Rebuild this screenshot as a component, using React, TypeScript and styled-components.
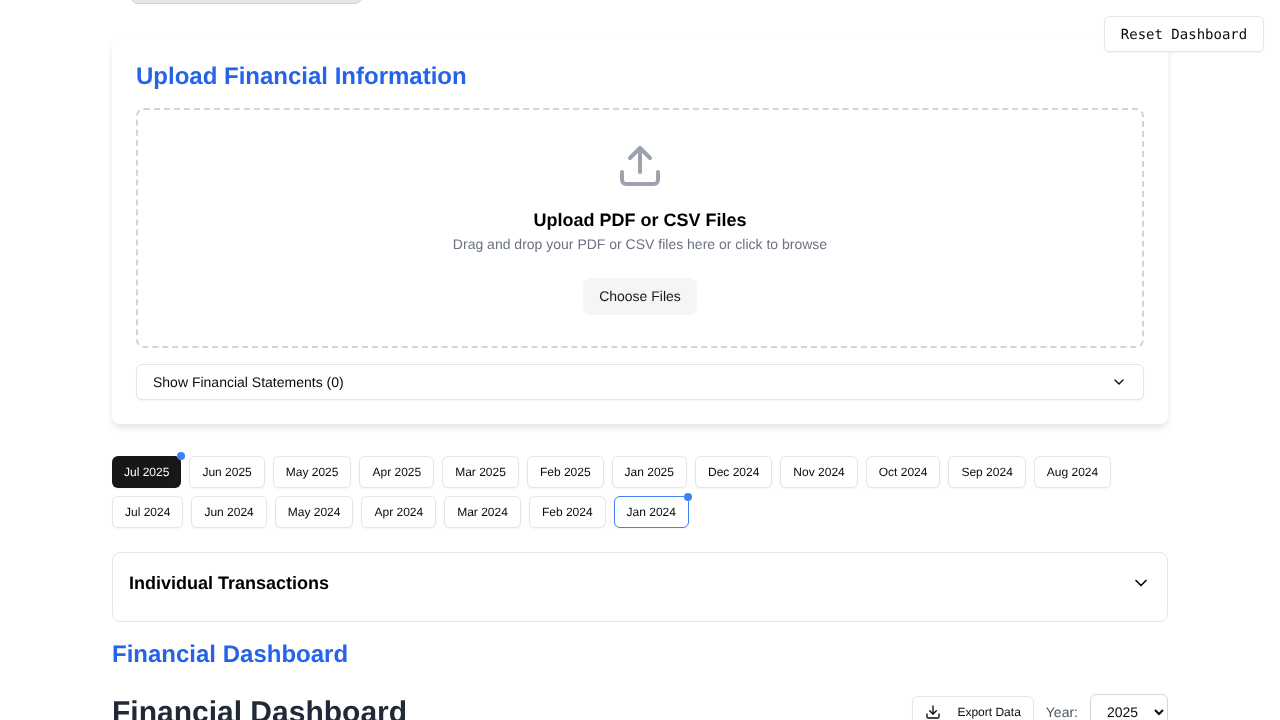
import React from "react";
import styled, { createGlobalStyle } from "styled-components";

const Global = createGlobalStyle`
  html, body { margin: 0; padding: 0; background: #fff; height: 720px; overflow: hidden; }
  body { font-family: "Liberation Sans", Arial, sans-serif; color: #0a0a0a; text-rendering: geometricPrecision; -webkit-font-smoothing: antialiased; }
  button, select { text-rendering: geometricPrecision; }
  * { box-sizing: border-box; }
`;

const Page = styled.main`
  width: 1056px;
  height: 720px;
  margin: 0 auto;
  display: flex;
  flex-direction: column;
  will-change: transform;
`;

const TopStub = styled.div`
  width: 233px;
  height: 24px;
  margin: -20px 0 0 18px;
  background: #e5e7eb;
  border: 1px solid #d1d5db;
  border-radius: 8px;
  flex: none;
`;

const ResetButton = styled.button`
  position: fixed;
  top: 16px;
  right: 16px;
  z-index: 10;
  width: 160px;
  height: 36px;
  background: #fff;
  border: 1px solid #e5e5e5;
  border-radius: 6px;
  box-shadow: 0 1px 2px rgba(0, 0, 0, 0.05);
  font-family: "DejaVu Sans Mono", monospace;
  font-size: 14px;
  color: #0a0a0a;
  padding: 2px 0 0;
  will-change: transform;
`;

const UploadCard = styled.section`
  margin-top: 36px;
  height: 384px;
  flex: none;
  padding: 24px;
  background: #fff;
  border-radius: 8px;
  box-shadow: 0 4px 6px rgba(0, 0, 0, 0.1);
`;

const CardTitle = styled.h2`
  margin: 0 0 16px;
  font-size: 24px;
  line-height: 26px;
  height: 28px;
  font-weight: 700;
  color: #2563eb;
`;

const DropZone = styled.div`
  height: 240px;
  border: 2px dashed #d1d5db;
  border-radius: 8px;
  display: flex;
  flex-direction: column;
  align-items: center;
  padding-top: 32px;
`;

const UploadIcon = styled.svg`
  width: 48px;
  height: 48px;
  color: #9ca3af;
  display: block;
`;

const DropTitle = styled.h3`
  margin: 16px 0 0;
  font-size: 18px;
  line-height: 28px;
  font-weight: 700;
  color: #000;
`;

const DropHint = styled.p`
  margin: 0;
  font-size: 14px;
  line-height: 20px;
  color: #6b7280;
`;

const ChooseButton = styled.button`
  margin-top: 24px;
  width: 114px;
  height: 37px;
  border: 0;
  border-radius: 8px;
  background: #f5f5f5;
  font-family: inherit;
  font-size: 14px;
  color: #171717;
  padding: 0 0 2px;
`;

const StatementsToggle = styled.button`
  width: 100%;
  height: 36px;
  margin-top: 16px;
  padding: 0 16px;
  display: flex;
  align-items: center;
  justify-content: space-between;
  background: #fff;
  border: 1px solid #e5e5e5;
  border-radius: 6px;
  box-shadow: 0 1px 2px rgba(0, 0, 0, 0.05);
  font-family: inherit;
  font-size: 14px;
  color: #0a0a0a;
`;

const MonthGrid = styled.div`
  margin-top: 32px;
  display: flex;
  flex-direction: column;
  gap: 8px;
  flex: none;
`;

const MonthRow = styled.div`
  display: flex;
  gap: 8px;
`;

const MonthChip = styled.button<{ $active?: boolean; $selected?: boolean }>`
  position: relative;
  height: 32px;
  padding: 0 12px;
  border-radius: 6px;
  font-family: inherit;
  font-size: 12px;
  white-space: nowrap;
  box-shadow: 0 1px 2px rgba(0, 0, 0, 0.05);
  background: ${(p) => (p.$active ? "#171717" : "#fff")};
  color: ${(p) => (p.$active ? "#fafafa" : "#0a0a0a")};
  border: ${(p) => (p.$active ? "0" : `1px solid ${p.$selected ? "#3b82f6" : "#e5e5e5"}`)};
`;

const Dot = styled.span`
  position: absolute;
  top: -4px;
  right: -4px;
  width: 8px;
  height: 8px;
  border-radius: 50%;
  background: #3b82f6;
`;

const TransactionsCard = styled.section`
  margin-top: 24px;
  height: 70px;
  flex: none;
  padding: 0 16px;
  border: 1px solid #e5e5e5;
  border-radius: 8px;
  background: #fff;
  display: flex;
  align-items: flex-start;
  justify-content: space-between;
`;

const TransactionsTitle = styled.h3`
  margin: 16px 0 0;
  font-size: 18px;
  line-height: 28px;
  font-weight: 700;
  color: #000;
`;

const TransactionsChevron = styled.svg`
  width: 20px;
  height: 20px;
  margin-top: 20px;
  color: #0a0a0a;
`;

const SectionTitle = styled.h2`
  margin: 16px 0 0;
  font-size: 24px;
  line-height: 34px;
  font-weight: 700;
  color: #2563eb;
  flex: none;
`;

const DashboardHeader = styled.div`
  margin-top: 22px;
  display: flex;
  align-items: flex-start;
  justify-content: space-between;
  flex: none;
`;

const DashboardTitle = styled.h1`
  margin: 0;
  font-size: 30px;
  line-height: 38px;
  font-weight: 700;
  color: #1f2937;
`;

const Controls = styled.div`
  display: flex;
  align-items: center;
  gap: 12px;
`;

const ExportButton = styled.button`
  width: 122px;
  height: 32px;
  padding: 0 12px;
  display: flex;
  align-items: center;
  justify-content: space-between;
  background: #fff;
  border: 1px solid #e5e5e5;
  border-radius: 6px;
  box-shadow: 0 1px 2px rgba(0, 0, 0, 0.05);
  font-family: inherit;
  font-size: 12px;
  color: #0a0a0a;
`;

const YearLabel = styled.span`
  font-size: 14px;
  color: #4b5563;
`;

const YearSelect = styled.select`
  width: 78px;
  height: 36px;
  padding: 0 8px 0 12px;
  background: #fff;
  border: 1px solid #d1d5db;
  border-radius: 6px;
  font-family: inherit;
  font-size: 14px;
  color: #0a0a0a;
`;

const row1 = ["Jul 2025","Jun 2025","May 2025","Apr 2025","Mar 2025","Feb 2025","Jan 2025","Dec 2024","Nov 2024","Oct 2024","Sep 2024","Aug 2024"];
const row2 = ["Jul 2024","Jun 2024","May 2024","Apr 2024","Mar 2024","Feb 2024","Jan 2024"];

const Chevron = () => (
  <svg width="16" height="16" viewBox="0 0 24 24" fill="none" stroke="currentColor" strokeWidth="2" strokeLinecap="round" strokeLinejoin="round">
    <path d="m6 9 6 6 6-6" />
  </svg>
);

export default function App() {
  return (
    <>
      <Global />
      <ResetButton>Reset Dashboard</ResetButton>
      <Page>
        <TopStub />
        <UploadCard>
          <CardTitle>Upload Financial Information</CardTitle>
          <DropZone>
            <UploadIcon viewBox="0 0 24 24" fill="none" stroke="currentColor" strokeWidth="2" strokeLinecap="round" strokeLinejoin="round">
              <path d="M12 3v12" />
              <path d="m17 8-5-5-5 5" />
              <path d="M21 15v4a2 2 0 0 1-2 2H5a2 2 0 0 1-2-2v-4" />
            </UploadIcon>
            <DropTitle>Upload PDF or CSV Files</DropTitle>
            <DropHint>Drag and drop your PDF or CSV files here or click to browse</DropHint>
            <ChooseButton>Choose Files</ChooseButton>
          </DropZone>
          <StatementsToggle>
            <span>Show Financial Statements (0)</span>
            <Chevron />
          </StatementsToggle>
        </UploadCard>
        <MonthGrid>
          <MonthRow>
            {row1.map((m, i) => (
              <MonthChip key={m} $active={i === 0}>
                {m}
                {i === 0 && <Dot />}
              </MonthChip>
            ))}
          </MonthRow>
          <MonthRow>
            {row2.map((m) => (
              <MonthChip key={m} $selected={m === "Jan 2024"}>
                {m}
                {m === "Jan 2024" && <Dot />}
              </MonthChip>
            ))}
          </MonthRow>
        </MonthGrid>
        <TransactionsCard>
          <TransactionsTitle>Individual Transactions</TransactionsTitle>
          <TransactionsChevron viewBox="0 0 24 24" fill="none" stroke="currentColor" strokeWidth="2" strokeLinecap="round" strokeLinejoin="round">
            <path d="m6 9 6 6 6-6" />
          </TransactionsChevron>
        </TransactionsCard>
        <SectionTitle>Financial Dashboard</SectionTitle>
        <DashboardHeader>
          <DashboardTitle>Financial Dashboard</DashboardTitle>
          <Controls>
            <ExportButton>
              <svg width="16" height="16" viewBox="0 0 24 24" fill="none" stroke="currentColor" strokeWidth="2" strokeLinecap="round" strokeLinejoin="round">
                <path d="M12 15V3" />
                <path d="m7 10 5 5 5-5" />
                <path d="M21 15v4a2 2 0 0 1-2 2H5a2 2 0 0 1-2-2v-4" />
              </svg>
              <span>Export Data</span>
            </ExportButton>
            <YearLabel>Year:</YearLabel>
            <YearSelect defaultValue="2025">
              <option>2025</option>
              <option>2024</option>
            </YearSelect>
          </Controls>
        </DashboardHeader>
      </Page>
    </>
  );
}
